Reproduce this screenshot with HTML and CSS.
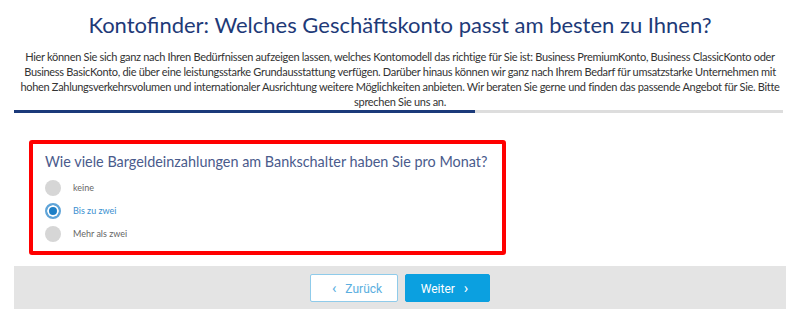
FILE: index.html
```html
<!DOCTYPE html>
<html lang="de">

<head>
  <meta charset="UTF-8">
  <meta name="viewport" content="width=device-width, initial-scale=1.0">
  <title>Kontofinder</title>
  <link rel="stylesheet" href="styles.css">
</head>

<body>
  <div class="page">
    <h1 class="title">Kontofinder: Welches Geschäftskonto passt am besten zu Ihnen?</h1>
    <p class="intro">Hier können Sie sich ganz nach Ihren Bedürfnissen aufzeigen lassen, welches Kontomodell das richtige für Sie ist: Business PremiumKonto, Business ClassicKonto oder Business BasicKonto, die über eine leistungsstarke Grundausstattung verfügen. Darüber hinaus können wir ganz nach Ihrem Bedarf für umsatzstarke Unternehmen mit hohen Zahlungsverkehrsvolumen und internationaler Ausrichtung weitere Möglichkeiten anbieten. Wir beraten Sie gerne und finden das passende Angebot für Sie. Bitte sprechen Sie uns an.</p>
    <div class="progress">
      <div class="progress-bar" style="width: 60%"></div>
    </div>

    <div class="question">
      <h2 class="question-title">Wie viele Bargeldeinzahlungen am Bankschalter haben Sie pro Monat?</h2>
      <label class="option">
        <span class="radio"></span>
        <span class="label">keine</span>
      </label>
      <label class="option checked">
        <span class="radio"></span>
        <span class="label">Bis zu zwei</span>
      </label>
      <label class="option">
        <span class="radio"></span>
        <span class="label">Mehr als zwei</span>
      </label>
    </div>

    <div class="actions">
      <button class="btn btn-back"><span class="chev">&#8249;</span> Zurück</button>
      <button class="btn btn-next">Weiter <span class="chev">&#8250;</span></button>
    </div>
  </div>
</body>

</html>
```

FILE: styles.css
```css
body {
  margin: 0;
  background-color: #fff;
  font-family: "Lato", "Noto Sans", sans-serif;
}

.page {
  padding: 0 14px;
}

.title {
  margin: 10px 0 0;
  font-size: 22px;
  line-height: 30px;
  font-weight: 400;
  text-align: center;
  color: #1e3a78;
}

.intro {
  margin: 9px 0 0;
  font-size: 11px;
  line-height: 15px;
  letter-spacing: -0.3px;
  text-align: center;
  color: #333;
}

.progress {
  margin-top: 1px;
  width: 769px;
  height: 3px;
  background-color: #ddd;
}

.progress-bar {
  height: 3px;
  background-color: #1b3a7a;
}

.question {
  box-sizing: border-box;
  margin: 27px 0 0 15px;
  width: 477px;
  height: 115px;
  border: 4px solid #f00;
  border-radius: 3px;
  padding: 0 12px;
}

.question-title {
  margin: 8px 0 4px;
  font-size: 14.4px;
  line-height: 20px;
  font-weight: 400;
  white-space: nowrap;
  color: #4a5b8c;
}

.option {
  display: flex;
  align-items: center;
  height: 23px;
  font-size: 9px;
  color: #666;
}

.option .radio {
  box-sizing: border-box;
  width: 16px;
  height: 16px;
  margin-right: 12px;
  border-radius: 50%;
  background-color: #d6d6d6;
}

.option.checked .radio {
  border: 2px solid #5fa4d8;
  background-color: #1e7fc6;
  box-shadow: inset 0 0 0 2px #fff;
}

.option.checked .label {
  color: #3a8fd0;
}

.actions {
  margin-top: 11px;
  height: 43px;
  display: flex;
  justify-content: center;
  align-items: flex-start;
  gap: 7px;
  padding-top: 8px;
  box-sizing: border-box;
  background-color: #e4e4e4;
}

.btn {
  height: 28px;
  padding: 0;
  border-radius: 2px;
  font-family: "Liberation Sans Narrow", "Roboto", sans-serif;
  font-size: 12px;
}

.btn .chev {
  font-size: 15px;
  margin: 0 6px;
}

.btn-back {
  width: 88px;
  border: 1px solid #8fcbea;
  background-color: #fff;
  color: #5aaee0;
}

.btn-next {
  width: 85px;
  border: 1px solid #0ba0e0;
  background-color: #0ba0e0;
  color: #fff;
}
```
